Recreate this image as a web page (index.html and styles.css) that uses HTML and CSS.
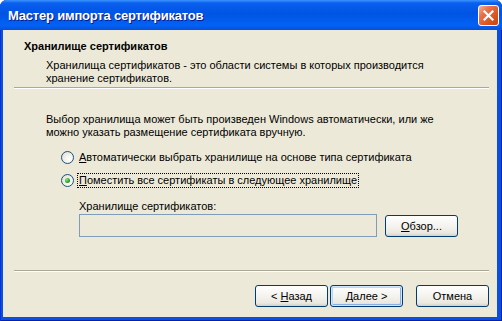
FILE: index.html
```html
<!DOCTYPE html>
<html lang="ru">
<head>
  <meta charset="UTF-8">
  <title>Мастер импорта сертификатов</title>
  <link rel="stylesheet" href="styles.css">
</head>
<body>
  <div class="window">
    <div class="titlebar">
      <span class="title">Мастер импорта сертификатов</span>
      <span class="close">
        <svg width="11" height="11" viewBox="0 0 11 11">
          <path d="M1.5 1.5 L9.5 9.5 M9.5 1.5 L1.5 9.5" stroke="#fff" stroke-width="2.2" stroke-linecap="square"/>
        </svg>
      </span>
    </div>
    <div class="client">
      <div class="header">
        <div class="h-title">Хранилище сертификатов</div>
        <div class="h-desc">Хранилища сертификатов - это области системы в которых производится<br>хранение сертификатов.</div>
      </div>
      <div class="sep"></div>

      <div class="content">
        <p class="intro">Выбор хранилища может быть произведен Windows автоматически, или же<br>можно указать размещение сертификата вручную.</p>
        <div class="radio">
          <span class="circle"></span>
          <span class="radio-label"><u>А</u>втоматически выбрать хранилище на основе типа сертификата</span>
        </div>
        <div class="radio checked">
          <span class="circle"></span>
          <span class="radio-label focus"><u>П</u>оместить все сертификаты в следующее хранилище</span>
        </div>
        <div class="store">
          <div class="store-label">Хранилище сертификатов:</div>
          <div class="store-row">
            <div class="field"></div>
            <button class="btn"><u>О</u>бзор...</button>
          </div>
        </div>
      </div>

      <div class="sep bottom-sep"></div>
      <div class="buttons">
        <button class="btn">&lt; <u>Н</u>азад</button>
        <button class="btn default"><u>Д</u>алее &gt;</button>
        <button class="btn cancel">Отмена</button>
      </div>
    </div>
  </div>
</body>
</html>
```

FILE: styles.css
```css
body {
  margin: 0;
  font-family: "Liberation Sans", Arial, sans-serif;
  font-size: 11px;
  color: #000;
  background: #fff;
}
.window {
  width: 502px;
  height: 321px;
  display: flex;
  flex-direction: column;
  background: #0A4FE0;
  box-shadow: inset 1px 0 0 #0831D9, inset -1px 0 0 #0021A8, inset 0 -1px 0 #0021A8;
  border-radius: 7px 7px 0 0;
  overflow: hidden;
}
.titlebar {
  height: 30px;
  display: flex;
  align-items: center;
  padding: 0 3px 0 8px;
  background: linear-gradient(to bottom, #3D95FF 0%, #0A5FEE 10%, #0054E3 45%, #0162F5 85%, #0A4FD8 100%);
}
.title {
  flex: 1;
  color: #fff;
  font-weight: bold;
  font-size: 13px;
  letter-spacing: -0.2px;
  text-shadow: 1px 1px 0 #0A1883;
}
.close {
  width: 19px;
  height: 19px;
  border: 1px solid #fff;
  border-radius: 3px;
  display: flex;
  align-items: center;
  justify-content: center;
  background: linear-gradient(135deg, #F6B39A 0%, #E8734E 30%, #D9531F 70%, #C94512 100%);
  margin-top: 1px;
}
.client {
  flex: 1;
  margin: 0 5px 4px 3px;
  background: #ECE9D8;
  display: flex;
  flex-direction: column;
}
.header {
  padding: 10px 0 0 21px;
  line-height: 13px;
}
.h-title {
  font-weight: bold;
}
.h-desc {
  margin: 6px 0 0 22px;
}
.sep {
  height: 1px;
  margin: 2px 8px 0 11px;
  background: #ACA899;
  border-bottom: 1px solid #fff;
}
.content {
  padding-left: 43px;
  line-height: 13px;
}
.intro {
  margin: 24px 0 0 0;
}
.radio {
  display: flex;
  align-items: center;
  height: 13px;
  margin: 12px 0 0 15px;
}
.radio.checked {
  margin-top: 10px;
}
.circle {
  width: 11px;
  height: 11px;
  border: 1px solid #1C5180;
  border-radius: 50%;
  background: radial-gradient(circle at 65% 65%, #fff 0%, #F3F2EC 40%, #DCD8CB 100%);
  margin-right: 3px;
  display: flex;
  align-items: center;
  justify-content: center;
}
.checked .circle::after {
  content: "";
  width: 5px;
  height: 5px;
  border-radius: 50%;
  background: radial-gradient(circle at 35% 35%, #8FE38F 0%, #21A121 60%, #1A8A1A 100%);
}
.radio-label {
  padding: 0 1px;
  border: 1px dotted transparent;
}
.radio-label.focus {
  border-color: #000;
}
.store {
  margin: 13px 0 0 33px;
}
.store-row {
  display: flex;
  align-items: center;
  gap: 8px;
  margin-top: 1px;
}
.field {
  width: 296px;
  height: 21px;
  border: 1px solid #7F9DB9;
  background: #ECE9D8;
}
.btn {
  width: 73px;
  height: 22px;
  padding: 0;
  border: 1px solid #003C74;
  border-radius: 3px;
  background: linear-gradient(to bottom, #FFFFFF 0%, #F4F3EE 50%, #EAE8DF 85%, #D6D0C5 100%);
  font-family: "Liberation Sans", Arial, sans-serif;
  font-size: 11px;
  color: #000;
}
.btn.default {
  box-shadow: inset 0 0 0 1px #CEE7FF, inset 1px 1px 0 1px #BCD4F6, inset -1px -1px 0 1px #89ADE4;
}
.bottom-sep {
  margin-top: 33px;
}
.buttons {
  display: flex;
  justify-content: flex-end;
  gap: 2px;
  padding: 13px 8px 0 0;
}
.btn.cancel {
  margin-left: 11px;
}
```
